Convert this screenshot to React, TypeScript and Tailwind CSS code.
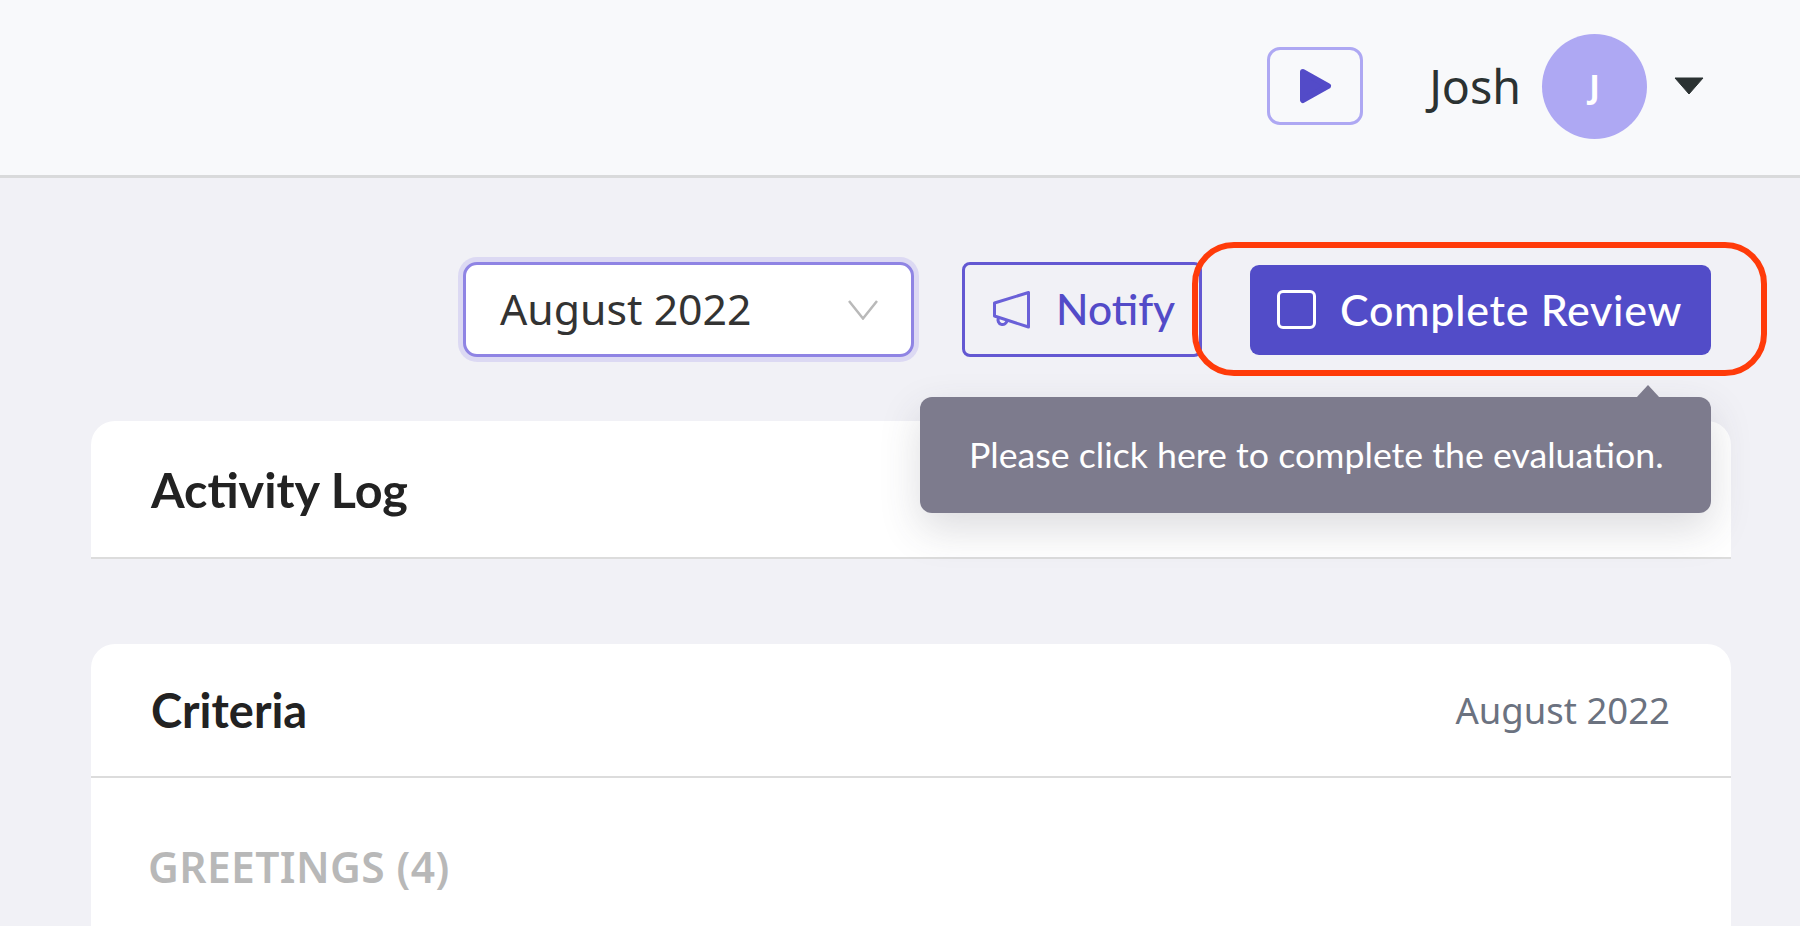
const PlayIcon = () => (
  <svg width="33" height="36" viewBox="0 0 33 36">
    <path d="M4 4 L29 18 L4 32 Z" fill="#534bc8" stroke="#534bc8" strokeWidth="6" strokeLinejoin="round" />
  </svg>
);

const HornIcon = () => (
  <svg width="40" height="41" viewBox="0 0 40 41" fill="none" stroke="#6a60d8" strokeWidth="3" strokeLinejoin="round">
    <path d="M37.5 3.5 V38 L3.5 27 V14 Z" />
    <path d="M7.5 29 A4.5 4.5 0 1 0 16 31.5" />
  </svg>
);

const App = () => {
  return (
    <div className="relative h-[926px] w-[1800px] overflow-hidden bg-[#f1f1f6]">
      {/* top bar */}
      <header className="flex h-[178px] items-center justify-end border-b-[3px] border-[#d9dadb] bg-[#f8f9fb] pr-[96px] pb-[3px]">
        <button className="mr-[66px] flex h-[78px] w-[96px] items-center justify-center rounded-[13px] border-[3px] border-[#aea8f3]">
          <PlayIcon />
        </button>
        <span className="mr-[21px] font-['Noto_Sans',sans-serif] text-[46.5px] leading-none text-[#2b3232]">Josh</span>
        <div className="mr-[27px] flex h-[105px] w-[105px] items-center justify-center rounded-full bg-[#aea8f3] font-['Noto_Sans',sans-serif] text-[32px] font-bold text-white">
          J
        </div>
        <svg width="30" height="18" viewBox="0 0 30 18">
          <path d="M1 1 H29 L15 17 Z" fill="#2b3232" stroke="#2b3232" strokeLinejoin="round" />
        </svg>
      </header>

      {/* actions */}
      <div className="relative flex items-center justify-end gap-[48px] pt-[84px] pr-[89px]">
        <div className="flex h-[95px] w-[451px] items-center justify-between rounded-[14px] border-[3px] border-[#8f84e4] bg-white pr-[33px] pl-[34px] shadow-[0_0_0_5px_#dcd9f3]">
          <span className="font-['Noto_Sans',sans-serif] text-[42.8px] leading-none text-[#333]">August 2022</span>
          <svg width="30" height="20" viewBox="0 0 30 20" fill="none" stroke="#b9b9b9" strokeWidth="2.5">
            <path d="M1 1 L15 18.5 L29 1" />
          </svg>
        </div>
        <button className="flex h-[95px] w-[240px] items-center gap-[25px] rounded-[8px] border-[3px] border-[#6358d2] pl-[26px]">
          <HornIcon />
          <span className="font-['Lato',sans-serif] text-[42.5px] leading-none font-medium text-[#534bc8]">Notify</span>
        </button>
        <button className="flex h-[90px] w-[461px] items-center gap-[24px] rounded-[9px] bg-[#524cc8] pl-[27px]">
          <span className="h-[39px] w-[39px] rounded-[6px] border-[3px] border-white" />
          <span className="font-['Lato',sans-serif] text-[43px] leading-none font-medium tracking-[0.7px] text-white">Complete Review</span>
        </button>

        {/* highlight ring */}
        <div className="absolute top-[64px] left-[1192px] h-[134px] w-[575px] rounded-[42px] border-[6px] border-[#ff3b0a]" />

        {/* tooltip */}
        <div className="absolute top-[219px] left-[920px] z-10 flex h-[116px] w-[791px] items-center rounded-[12px] bg-[#7d7b8d] pl-[49px] shadow-[0_16px_40px_rgba(60,60,80,0.18)]">
          <span className="font-['Lato',sans-serif] text-[35.7px] leading-none text-white">Please click here to complete the evaluation.</span>
          <svg className="absolute -top-[12px] left-[716px]" width="24" height="13" viewBox="0 0 24 13">
            <path d="M0 13 L12 0 L24 13 Z" fill="#7d7b8d" />
          </svg>
        </div>
      </div>

      <main className="mt-[64px] ml-[91px] flex w-[1640px] flex-col gap-[85px]">
        <section className="flex h-[138px] items-center rounded-t-[24px] border-b-2 border-[#dcdcdc] bg-white pl-[60px]">
          <h2 className="font-['Lato',sans-serif] text-[48.5px] leading-none font-bold text-[#222]">Activity Log</h2>
        </section>

        <section className="rounded-t-[24px] bg-white">
          <div className="flex h-[134px] items-center justify-between border-b-2 border-[#dcdcdc] pr-[61px] pl-[60px]">
            <h2 className="font-['Lato',sans-serif] text-[47px] leading-none font-bold text-[#222]">Criteria</h2>
            <span className="font-['Noto_Sans',sans-serif] text-[36.5px] leading-none text-[#6b7280]">August 2022</span>
          </div>
          <div className="h-[300px] pt-[68px] pl-[57px]">
            <h3 className="font-['Noto_Sans',sans-serif] text-[42.5px] leading-none font-semibold tracking-[0.4px] text-[#b8b8b8]">GREETINGS (4)</h3>
          </div>
        </section>
      </main>
    </div>
  );
};

export default App;
